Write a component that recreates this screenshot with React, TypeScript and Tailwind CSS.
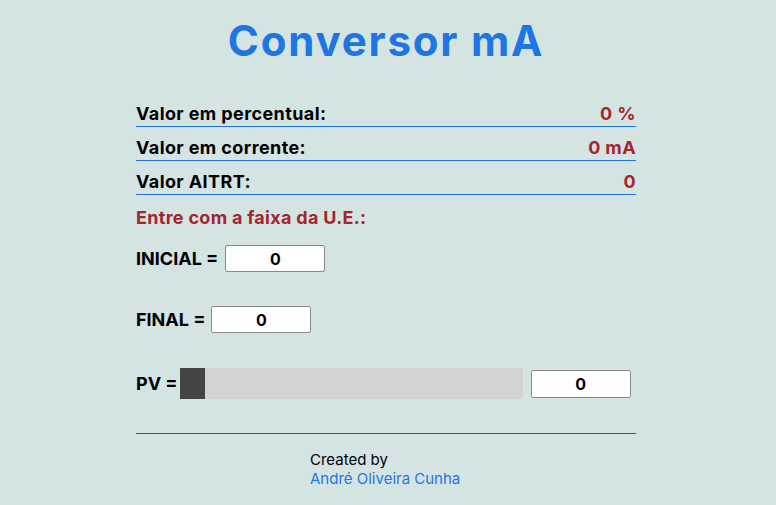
import { useState } from "react";

const font = { fontFamily: "Inter, 'Liberation Sans', sans-serif" };

function ResultRow({ label, value }: { label: string; value: string }) {
  return (
    <div className="flex items-end justify-between border-b border-b-[#1f74dc] h-[34px] pb-[1px]">
      <span className="text-[18px] font-bold text-black leading-[22px] tracking-[0.4px]">{label}</span>
      <span className="text-[18px] font-bold text-[#a3262e] leading-[22px] tracking-[0.4px]">{value}</span>
    </div>
  );
}

export default function App() {
  const [inicial, setInicial] = useState("0");
  const [final, setFinal] = useState("0");
  const [pv, setPv] = useState(0);

  const ini = parseFloat(inicial) || 0;
  const fim = parseFloat(final) || 0;
  const pct = fim - ini !== 0 ? ((pv - ini) / (fim - ini)) * 100 : 0;
  const ma = pct !== 0 ? 4 + (pct / 100) * 16 : 0;

  return (
    <div className="min-h-[505px] w-full bg-[#d4e4e3]" style={font}>
      <div className="w-[500px] ml-[136px] pt-[16px]">
        <h1 className="text-center text-[42px] font-bold leading-[50px] text-[#1d76e3] tracking-[1.8px]">
          Conversor mA
        </h1>

        <div className="mt-[27px] flex flex-col">
          <ResultRow label="Valor em percentual:" value={`${Math.round(pct)} %`} />
          <ResultRow label="Valor em corrente:" value={`${Math.round(ma)} mA`} />
          <ResultRow label="Valor AITRT:" value={`${pv}`} />
        </div>

        <p className="mt-[12px] text-[18px] font-bold text-[#a3262e] leading-[22px] tracking-[0.3px]">
          Entre com a faixa da U.E.:
        </p>

        <div className="mt-[16px] flex items-center gap-[7px]">
          <span className="text-[18px] font-bold text-black">INICIAL =</span>
          <input
            value={inicial}
            onChange={(e) => setInicial(e.target.value)}
            className="w-[100px] h-[27px] bg-white border border-[#8a8a8a] rounded-[2px] text-center text-[16px] font-bold text-black outline-none"
          />
        </div>

        <div className="mt-[34px] flex items-center gap-[6px]">
          <span className="text-[18px] font-bold text-black">FINAL =</span>
          <input
            value={final}
            onChange={(e) => setFinal(e.target.value)}
            className="w-[100px] h-[27px] bg-white border border-[#8a8a8a] rounded-[2px] text-center text-[16px] font-bold text-black outline-none"
          />
        </div>

        <div className="mt-[35px] flex items-center">
          <span className="text-[18px] font-bold text-black mr-[2px]">PV =</span>
          <input
            type="range"
            min={Math.min(ini, fim)}
            max={Math.max(ini, fim) || 100}
            value={pv}
            onChange={(e) => setPv(Number(e.target.value))}
            className="w-[343px] h-[31px] appearance-none bg-[#d3d3d3] outline-none cursor-pointer [&::-webkit-slider-thumb]:appearance-none [&::-webkit-slider-thumb]:w-[25px] [&::-webkit-slider-thumb]:h-[31px] [&::-webkit-slider-thumb]:bg-[#444444]"
          />
          <input
            value={pv}
            onChange={(e) => setPv(Number(e.target.value) || 0)}
            className="ml-[8px] w-[100px] h-[28px] bg-white border border-[#8a8a8a] rounded-[2px] text-center text-[16px] font-bold text-black outline-none"
          />
        </div>

        <hr className="mt-[34px] border-0 border-t border-t-[#555555]" />

        <div className="mt-[16px] ml-[174px] text-[15px] leading-[19px]">
          <div className="text-black">Created by</div>
          <a href="#" className="text-[#1d76e3]">André Oliveira Cunha</a>
        </div>
      </div>
    </div>
  );
}
